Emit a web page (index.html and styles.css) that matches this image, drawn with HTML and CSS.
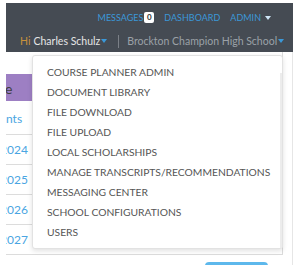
FILE: index.html
```html
<!DOCTYPE html>
<html>
<head>
<meta charset="utf-8">
<link rel="stylesheet" href="styles.css">
</head>
<body>
<div class="page">
  <header class="topbar">
    <nav class="row1">
      <a class="nav-link">MESSAGES<span class="badge">0</span></a>
      <a class="nav-link">DASHBOARD</a>
      <a class="nav-link">ADMIN<span class="caret caret-light"></span></a>
    </nav>
    <div class="row2">
      <span class="hi">Hi</span>
      <span class="user">Charles Schulz</span><span class="caret"></span>
      <span class="sep"></span>
      <span class="school">Brockton Champion High School</span><span class="caret"></span>
    </div>
  </header>
  <main class="main">
    <section class="panel">
      <div class="left-col">
        <div class="hero">e</div>
        <div class="link-row"><a class="link">nts</a></div>
        <div class="year-row"><a class="link">2024</a></div>
        <div class="year-row"><a class="link">2025</a></div>
        <div class="year-row"><a class="link">2026</a></div>
        <div class="year-row"><a class="link">2027</a></div>
      </div>
    </section>
    <div class="footer"><span class="btn"></span></div>
  </main>
  <ul class="dropdown">
    <li>COURSE PLANNER ADMIN</li>
    <li>DOCUMENT LIBRARY</li>
    <li>FILE DOWNLOAD</li>
    <li>FILE UPLOAD</li>
    <li>LOCAL SCHOLARSHIPS</li>
    <li>MANAGE TRANSCRIPTS/RECOMMENDATIONS</li>
    <li>MESSAGING CENTER</li>
    <li>SCHOOL CONFIGURATIONS</li>
    <li>USERS</li>
  </ul>
</div>
</body>
</html>
```
FILE: styles.css
```css
* { box-sizing: border-box; }
html, body { margin: 0; background: #fff; }
body {
  padding: 3px 7px 0 6px;
  font-family: Lato, "Open Sans", sans-serif;
  width: 300px;
  height: 280px;
  overflow: hidden;
}
.page {
  position: relative;
  height: 262px;
  overflow: hidden;
}
.topbar {
  background: #454b53;
  height: 49px;
  display: flex;
  flex-direction: column;
  padding-top: 8px;
}
.row1 {
  display: flex;
  justify-content: flex-end;
  align-items: center;
  gap: 10px;
  padding-right: 22px;
  height: 13px;
  font-size: 9px;
  white-space: nowrap;
}
.nav-link {
  color: #3b98d8;
  display: flex;
  align-items: center;
}
.badge {
  background: #fff;
  color: #333;
  font-size: 8px;
  font-weight: bold;
  border-radius: 2px;
  padding: 0 2px;
  min-width: 10px;
  height: 11px;
  line-height: 11px;
  text-align: center;
  margin-left: 1px;
}
.caret {
  display: inline-block;
  flex: none;
  width: 0;
  height: 0;
  border-left: 3px solid transparent;
  border-right: 3px solid transparent;
  border-top: 4px solid #3b98d8;
  margin-left: 1px;
}
.caret-light { border-top-color: #cfe6f7; margin-left: 4px; }
.row2 {
  display: flex;
  align-items: center;
  height: 18px;
  margin-top: 8px;
  padding-left: 14px;
  font-size: 10.5px;
  white-space: nowrap;
}
.row2 span { flex: none; }
.hi { color: #c8913c; margin-right: 3px; }
.user { color: #e6e6e6; }
.sep {
  width: 1px;
  height: 13px;
  background: #7b8087;
  margin: 0 8px 0 11px;
}
.school { color: #9ba1a7; }
.main {
  height: 213px;
  border-right: 1px solid #e6e6e6;
  padding-right: 9px;
  display: flex;
  flex-direction: column;
}
.panel {
  height: 203px;
  border-right: 1px solid #dcdcdc;
  border-bottom: 1px solid #dcdcdc;
  padding-top: 22px;
}
.left-col {
  width: 40px;
  overflow: hidden;
}
.hero {
  background: #9d7fc3;
  height: 27px;
  line-height: 30px;
  font-size: 14px;
  color: #3d3d3d;
  text-indent: -1px;
}
.link-row {
  height: 34px;
  line-height: 36px;
  font-size: 12px;
  border-bottom: 1px solid #dcdcdc;
}
.link { color: #4aa5e2; }
.year-row {
  height: 30px;
  line-height: 30px;
  font-size: 12px;
  border-bottom: 1px solid #dcdcdc;
  text-indent: -6px;
}
.year-row:last-child { border-bottom: none; }
.footer {
  display: flex;
  justify-content: flex-end;
  padding-top: 7px;
  padding-right: 15px;
}
.btn {
  width: 63px;
  height: 10px;
  background: #5db8ec;
  border-radius: 4px 4px 0 0;
}
.dropdown {
  position: absolute;
  left: 26px;
  top: 52px;
  width: 251px;
  height: 194px;
  margin: 0;
  padding: 6px 0 0;
  list-style: none;
  background: #fff;
  border: 1px solid #e2e2e2;
  border-radius: 3px;
  box-shadow: 0 2px 5px rgba(0, 0, 0, 0.12);
}
.dropdown::after {
  content: "";
  position: absolute;
  right: 0;
  top: 17px;
  bottom: 0;
  width: 2px;
  background: #ececec;
}
.dropdown li {
  height: 20px;
  line-height: 20px;
  padding-left: 14px;
  font-size: 10.3px;
  color: #555;
  white-space: nowrap;
}
```
